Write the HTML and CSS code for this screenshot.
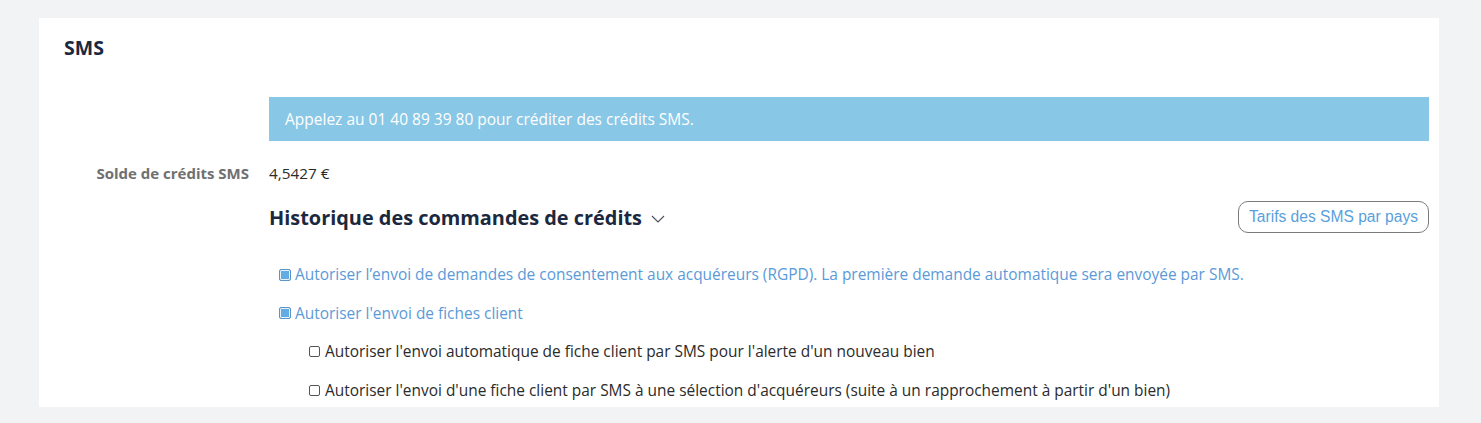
FILE: index.html
```html
<!DOCTYPE html>
<html lang="fr">

<head>
    <meta charset="UTF-8">
    <meta name="viewport" content="width=device-width, initial-scale=1.0">
    <title>SMS</title>
    <link rel="stylesheet" href="styles.css">
</head>

<body>
    <div class="card">
        <h2 class="title">SMS</h2>

        <div class="form">
            <div class="label"></div>
            <div class="banner">Appelez au 01 40 89 39 80 pour créditer des crédits SMS.</div>

            <div class="label solde">Solde de crédits SMS</div>
            <div class="value solde">4,5427 €</div>

            <div class="label"></div>
            <div class="history">
                <h3>Historique des commandes de crédits
                    <svg class="chevron" width="14" height="8" viewBox="0 0 14 8">
                        <path d="M1 1 L7 7 L13 1" fill="none" stroke="#4a4f5a" stroke-width="1.1" />
                    </svg>
                </h3>
                <button class="tarifs">Tarifs des SMS par pays</button>
            </div>

            <div class="label"></div>
            <div class="options">
                <label class="opt main"><span class="box checked"></span>Autoriser l’envoi de demandes de consentement aux acquéreurs (RGPD). La première demande automatique sera envoyée par SMS.</label>
                <label class="opt main"><span class="box checked"></span>Autoriser l'envoi de fiches client</label>
                <label class="opt sub"><span class="box"></span>Autoriser l'envoi automatique de fiche client par SMS pour l'alerte d'un nouveau bien</label>
                <label class="opt sub"><span class="box"></span>Autoriser l'envoi d'une fiche client par SMS à une sélection d'acquéreurs (suite à un rapprochement à partir d'un bien)</label>
            </div>
        </div>
    </div>
</body>

</html>
```

FILE: styles.css
```css
body {
    margin: 0;
    background-color: #f2f3f5;
    font-family: "Open Sans", sans-serif;
    color: #2b2b2b;
}

.card {
    margin: 18px 42px 0 39px;
    height: 389px;
    background-color: #fff;
    padding: 17px 10px 0 25px;
    box-sizing: border-box;
}

.title {
    margin: 0;
    font-size: 19.5px;
    font-weight: 700;
    color: #1b2940;
    line-height: 26px;
}

.form {
    display: grid;
    grid-template-columns: 185px 1fr;
    column-gap: 20px;
    margin-top: 36px;
}

.label {
    text-align: right;
    font-size: 15px;
    font-weight: 700;
    color: #707070;
}

.banner {
    background-color: #89c7e6;
    color: #fff;
    font-size: 15.5px;
    height: 44px;
    line-height: 44px;
    padding-left: 16px;
}

.solde {
    margin-top: 22px;
    line-height: 21px;
}

.value {
    font-size: 15.3px;
}

.history {
    display: flex;
    justify-content: space-between;
    align-items: center;
    margin-top: 17px;
}

.history h3 {
    margin: 0;
    font-size: 19.9px;
    font-weight: 700;
    color: #1b2940;
    display: flex;
    align-items: center;
    gap: 9px;
}

.chevron {
    margin-top: 3px;
}

.tarifs {
    font-family: "Liberation Sans", Arial, sans-serif;
    font-size: 15.6px;
    color: #5a9fdc;
    background: #fff;
    border: 1px solid #7b7b7b;
    border-radius: 10px;
    height: 32px;
    padding: 0 10px;
}

.options {
    display: flex;
    flex-direction: column;
    gap: 17.5px;
    margin-top: 31px;
    padding-left: 10px;
}

.opt {
    display: flex;
    align-items: center;
    font-size: 15.45px;
    line-height: 21px;
}

.main {
    color: #5b9ad8;
}

.sub {
    color: #2b2b2b;
    padding-left: 30px;
}

.box {
    width: 11px;
    height: 11px;
    box-sizing: border-box;
    border: 1px solid #555;
    border-radius: 2px;
    margin-right: 5px;
    flex: none;
}

.box.checked {
    width: 12px;
    height: 12px;
    margin-right: 4px;
    border-color: #5a95c9;
    background-color: #62ace3;
    box-shadow: inset 0 0 0 1px #e6f1fa;
}
```
